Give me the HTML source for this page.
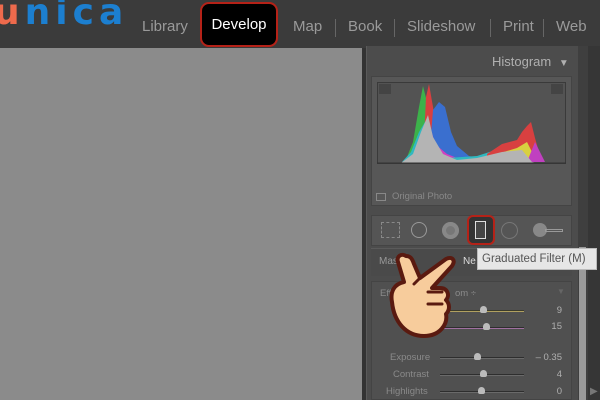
<!DOCTYPE html>
<html><head><meta charset="utf-8"><style>
*{margin:0;padding:0;box-sizing:border-box}
body{width:600px;height:400px;overflow:hidden;background:#3b3b3b;font-family:"Liberation Sans",sans-serif;position:relative}
.a{position:absolute}
.nav{color:#9a9a9a;font-size:15px;top:18px}
.sep{width:1px;height:18px;background:#666;top:19px}
.lbl{color:#8a8a8a;font-size:9.5px}
.val{color:#b0b0b0;font-size:9.5px;text-align:right;width:30px}
.tr{height:2px;background:#2e2e2e;border-bottom:1px solid #6a6a6a}
.th{width:7px;height:7px;background:#bbb;border-radius:50% 50% 2px 2px}
</style></head><body>
<div class="a" style="left:-6px;top:-8px;font-size:36px;font-family:'DejaVu Sans',sans-serif;font-weight:bold;letter-spacing:5px;color:#1c7fd0"><span style="color:#ee6a4c">u</span>nica</div>
<div class="a nav" style="left:142px">Library</div>
<div class="a" style="left:200px;top:2px;width:78px;height:45px;background:#000;border:2px solid #b52218;border-radius:9px;color:#fff;font-size:15px;text-align:center;line-height:41px">Develop</div>
<div class="a nav" style="left:293px">Map</div><div class="a sep" style="left:335px"></div>
<div class="a nav" style="left:348px">Book</div><div class="a sep" style="left:394px"></div>
<div class="a nav" style="left:407px">Slideshow</div><div class="a sep" style="left:490px"></div>
<div class="a nav" style="left:503px">Print</div><div class="a sep" style="left:543px"></div>
<div class="a nav" style="left:556px">Web</div>
<div class="a" style="left:0;top:48px;width:362px;height:352px;background:#8b8b8b"></div>
<div class="a" style="left:362px;top:48px;width:4px;height:352px;background:#333"></div>
<div class="a" style="left:366px;top:46px;width:212px;height:354px;background:#4c4c4c;border-left:1px solid #5a5a5a"></div>
<div class="a" style="left:578px;top:46px;width:10px;height:354px;background:#3f3f3f"></div>
<div class="a" style="left:579px;top:247px;width:7px;height:153px;background:#9a9a9a"></div>
<div class="a" style="left:588px;top:46px;width:12px;height:354px;background:#363636"></div>
<div class="a" style="left:590px;top:386px;color:#777;font-size:10px">▶</div>
<div class="a" style="left:492px;top:54px;color:#b0b0b0;font-size:13px">Histogram <span style="font-size:10px;margin-left:4px">▼</span></div>
<div class="a" style="left:371px;top:76px;width:201px;height:130px;background:#575757;border:1px solid #444"></div>
<div class="a" style="left:377px;top:82px;width:189px;height:82px;background:#535353;border:1px solid #3a3a3a"></div>
<svg class="a" style="left:377px;top:82px" width="189" height="82">
<rect x="2" y="2" width="12" height="10" fill="#444"/><rect x="174" y="2" width="12" height="10" fill="#444"/>
<path d="M28 80 L36 60 L42 25 L46 4 L50 20 L54 45 L60 70 L70 80Z" fill="#3cb24a"/>
<path d="M46 80 L49 15 L52 2 L56 25 L60 50 L62 80Z" fill="#d84040"/>
<path d="M42 60 L50 30 L55 22 L60 20 L66 25 L72 50 L78 65 L90 75 L110 80Z" fill="#d8c840" opacity="0"/>
<path d="M52 78 L56 28 L62 20 L68 25 L74 50 L80 64 L92 74 L120 80Z" fill="#3a6fcf"/>
<path d="M30 80 L42 55 L52 40 L58 62 L70 72 L80 76Z" fill="#d040c0"/>
<path d="M25 80 L34 70 L42 50 L48 40 L52 60 L70 76 L100 74 L125 66 L140 66 L150 80Z" fill="#30b8c0"/>
<path d="M110 72 L125 62 L140 58 L145 50 L150 44 L154 40 L158 56 L162 70 L166 80 L110 80Z" fill="#d84040"/>
<path d="M120 72 L140 66 L150 60 L156 72 L158 80 L120 80Z" fill="#d8d040"/>
<path d="M150 80 L158 60 L164 72 L168 80Z" fill="#c040c0"/>
<path d="M24 81 L36 72 L44 50 L51 33 L56 55 L66 72 L80 78 L100 76 L125 70 L145 68 L155 80 L160 81Z" fill="#b4b4b4"/>
<line x1="0" y1="81" x2="189" y2="81" stroke="#333"/>
</svg>
<div class="a" style="left:376px;top:193px;width:10px;height:8px;border:1px solid #888"></div>
<div class="a" style="left:392px;top:191px;color:#888;font-size:9.5px">Original Photo</div>
<div class="a" style="left:371px;top:215px;width:201px;height:31px;background:#555;border:1px solid #444"></div>
<div class="a" style="left:381px;top:222px;width:19px;height:16px;border:1px dashed #888"></div>
<div class="a" style="left:411px;top:222px;width:16px;height:16px;border:1px solid #999;border-radius:50%"></div>
<div class="a" style="left:442px;top:222px;width:17px;height:17px;background:#777;border-radius:50%;box-shadow:inset 0 0 0 4px #888"></div>
<div class="a" style="left:467px;top:215px;width:28px;height:30px;border:2px solid #b52218;border-radius:6px;background:#333"></div>
<div class="a" style="left:475px;top:221px;width:11px;height:18px;border:1px solid #ddd;background:#444"></div>
<div class="a" style="left:501px;top:222px;width:17px;height:17px;border:1px solid #777;border-radius:50%"></div>
<div class="a" style="left:533px;top:223px;width:14px;height:14px;background:#888;border-radius:50%"></div>
<div class="a" style="left:545px;top:229px;width:18px;height:3px;border:1px solid #999"></div>
<div class="a" style="left:371px;top:248px;width:201px;height:28px;background:#4a4a4a;border-top:1px solid #5a5a5a"></div>
<div class="a" style="left:379px;top:256px;color:#999;font-size:10px">Mask</div>
<div class="a" style="left:463px;top:256px;color:#ddd;font-size:10px">Ne</div>
<div class="a" style="left:477px;top:248px;width:120px;height:22px;background:#e6e6e6;border:1px solid #bbb;color:#555;font-size:11.5px;line-height:20px;padding-left:4px">Graduated Filter (M)</div>
<div class="a" style="left:371px;top:281px;width:201px;height:119px;background:#505050;border:1px solid #444"></div>
<div class="a lbl" style="left:380px;top:288px">Eff</div>
<div class="a lbl" style="left:455px;top:288px">om ÷</div>
<div class="a" style="left:557px;top:287px;color:#666;font-size:8px">▼</div>
<div class="a tr" style="left:440px;top:310px;width:84px;background:#3b3b2c;border-bottom-color:#b0a060"></div><div class="a th" style="left:480px;top:306px"></div><div class="a val" style="left:532px;top:305px">9</div>
<div class="a tr" style="left:440px;top:327px;width:84px;border-bottom-color:#a070a0"></div><div class="a th" style="left:483px;top:323px"></div><div class="a val" style="left:532px;top:321px">15</div>
<div class="a lbl" style="left:390px;top:352px">Exposure</div><div class="a tr" style="left:440px;top:357px;width:84px"></div><div class="a th" style="left:474px;top:353px"></div><div class="a val" style="left:532px;top:352px">– 0.35</div>
<div class="a lbl" style="left:393px;top:369px">Contrast</div><div class="a tr" style="left:440px;top:374px;width:84px"></div><div class="a th" style="left:480px;top:370px"></div><div class="a val" style="left:532px;top:369px">4</div>
<div class="a lbl" style="left:386px;top:386px">Highlights</div><div class="a tr" style="left:440px;top:391px;width:84px"></div><div class="a th" style="left:478px;top:387px"></div><div class="a val" style="left:532px;top:386px">0</div>
<svg class="a" style="left:384px;top:248px" width="80" height="92" viewBox="0 0 80 92">
<path d="M22 8 C18 5 12 8 14 14 L20 34 C10 36 6 44 8 54 C10 74 22 88 40 88 C56 88 64 76 62 66 C66 62 66 56 62 52 C66 48 64 40 56 40 L48 40 L68 18 C72 12 68 8 62 11 L36 30 L30 16 C28 10 26 8 22 8 Z" fill="#f7cc9c" stroke="#5a1a10" stroke-width="4" stroke-linejoin="round"/>
<path d="M36 30 L30 36 M44 44 L58 44 M44 56 L58 56" stroke="#5a1a10" stroke-width="3" fill="none" stroke-linecap="round"/>
</svg>
</body></html>
